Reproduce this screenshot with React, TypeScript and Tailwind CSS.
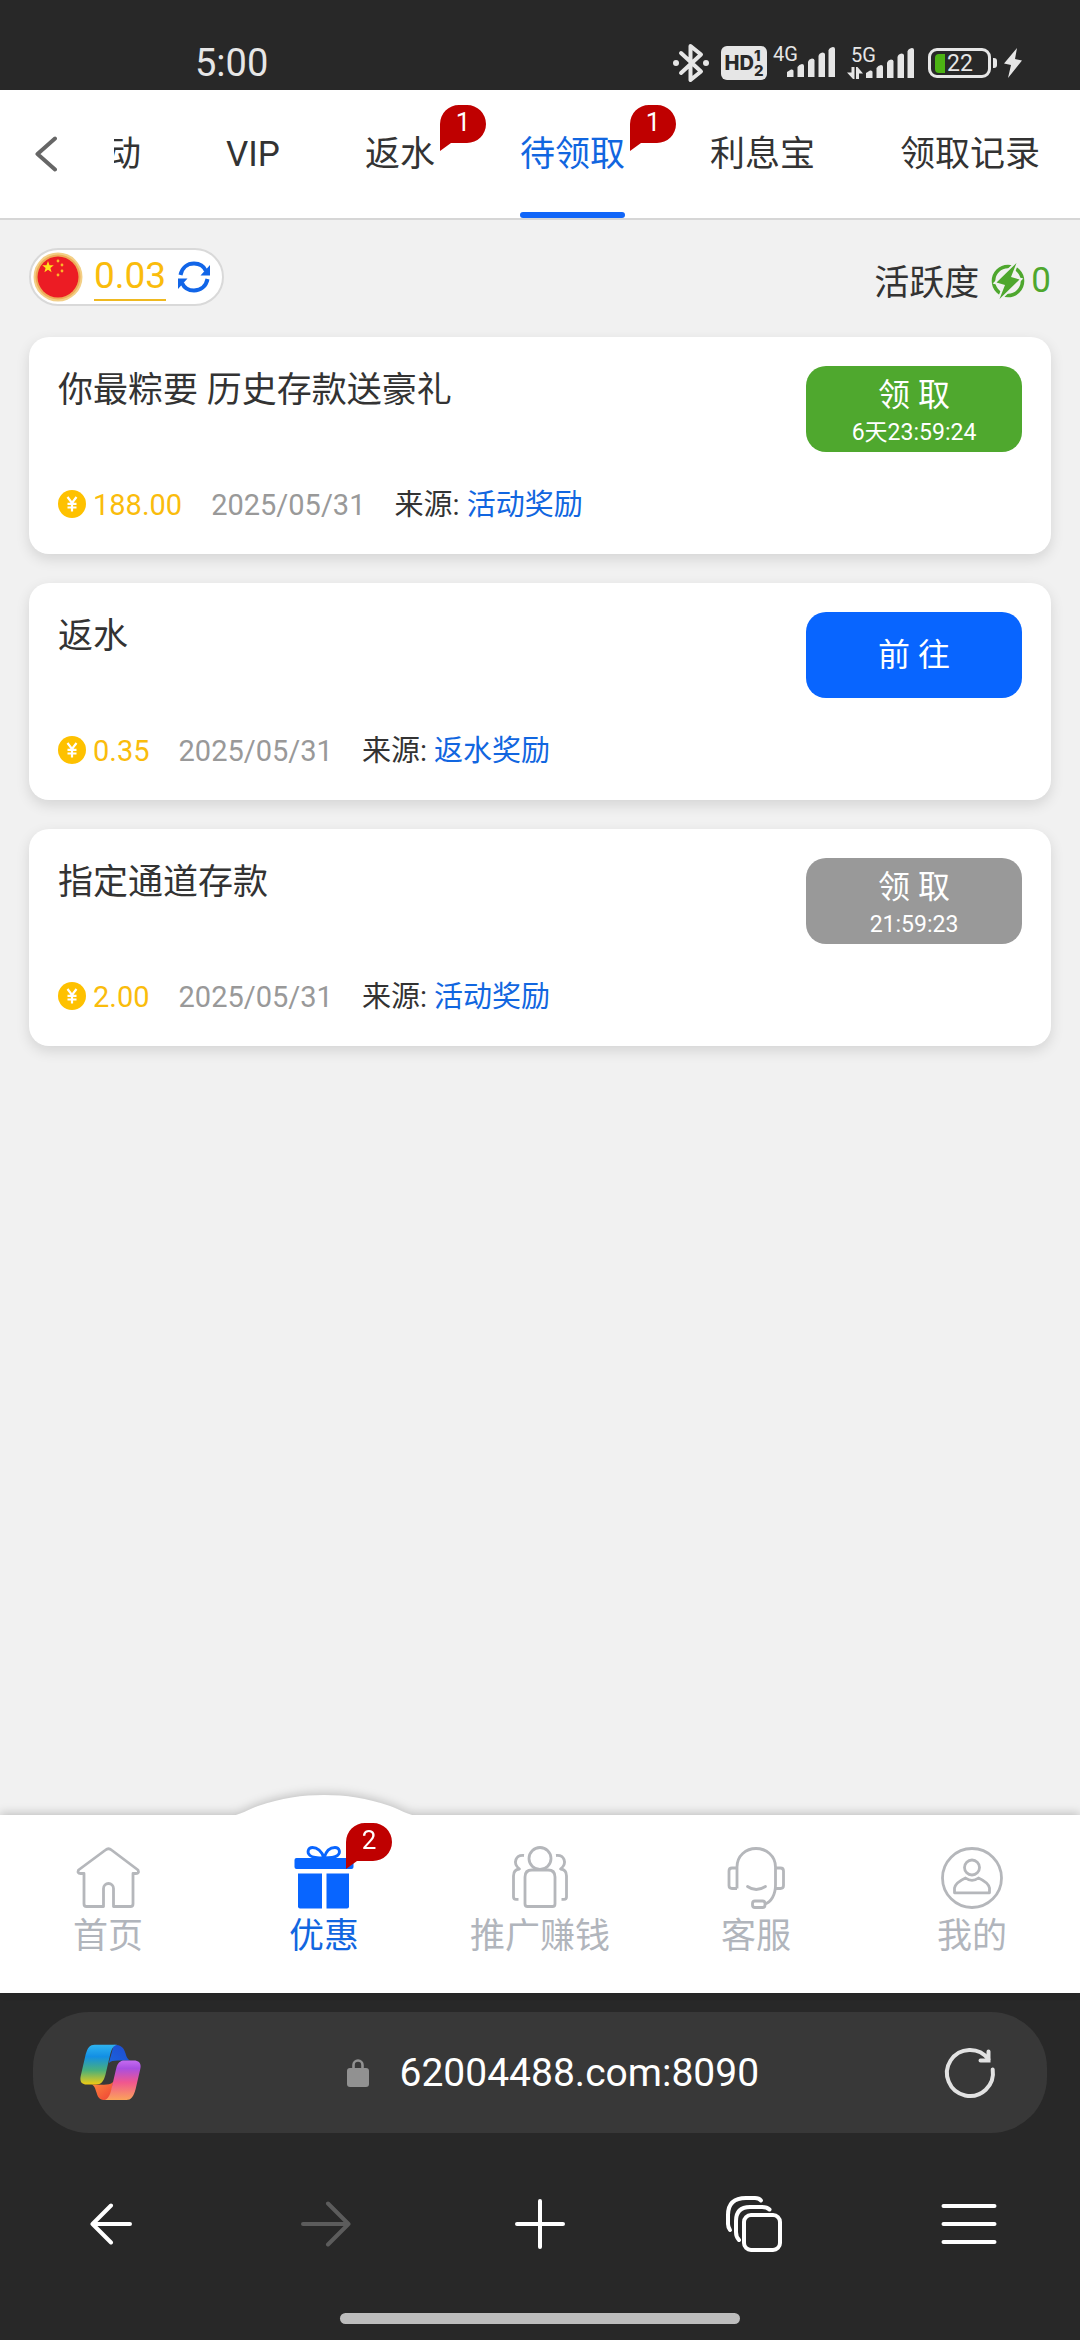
import React from 'react';
import clsx from 'clsx';

type Reward = {
  title: string;
  amount: string;
  date: string;
  source: string;
  action: string;
  countdown?: string;
  tone: string;
  disabled?: boolean;
};

const rewards: Reward[] = [
  {
    title: '你最粽要 历史存款送豪礼',
    amount: '188.00',
    date: '2025/05/31',
    source: '活动奖励',
    action: '领 取',
    countdown: '6天23:59:24',
    tone: 'bg-[#4fa82e]',
  },
  {
    title: '返水',
    amount: '0.35',
    date: '2025/05/31',
    source: '返水奖励',
    action: '前 往',
    tone: 'bg-[#0865ff]',
  },
  {
    title: '指定通道存款',
    amount: '2.00',
    date: '2025/05/31',
    source: '活动奖励',
    action: '领 取',
    countdown: '21:59:23',
    tone: 'bg-[#999999]',
    disabled: true,
  },
];

const tabs = [
  { label: '活动' },
  { label: 'VIP' },
  { label: '返水', badge: 1 },
  { label: '待领取', badge: 1, active: true },
  { label: '利息宝' },
  { label: '领取记录' },
];

const Badge = ({ count, className }: { count: number; className: string }) => (
  <span className={clsx('absolute block h-[46px] w-[46px]', className)}>
    <svg viewBox="0 0 46 46" className="absolute inset-0" aria-hidden="true">
      <path d="M0 46 V19 A19 19 0 0 1 19 0 H27 A19 19 0 0 1 27 38 H11 Z" fill="#bf0000" />
    </svg>
    <span className="relative block h-[34px] text-center text-[26px] leading-[34px] text-white">{count}</span>
  </span>
);

/* Status bar */

const Signal = ({ label, data }: { label: string; data?: boolean }) => (
  <div className={clsx('relative h-8', data ? 'w-[67px]' : 'w-[62px]')}>
    <span className={clsx('absolute -top-1 text-[20px] leading-6 text-[#e6e6e6]', data ? 'left-1' : 'left-0')}>
      {label}
    </span>
    <svg
      viewBox={data ? '0 0 67 32' : '5 0 62 32'}
      className={clsx('h-8', data ? 'w-[67px]' : 'w-[62px]')}
      fill="#e6e6e6"
      aria-hidden="true"
    >
      {data && (
        <path d="M4.500 20 h3 v12 h-1.500 L0 25.500 h4.500 Z M9 32 V20 h1.500 L16 26.500 h-4 V32 Z" />
      )}
      <path d="M19 31 V26 L23 23.500 Q25.500 23 25.500 25 V31 Z" />
      <path d="M29.500 31 V21 Q31 18.500 34 18 Q36 18 36 20 V31 Z" />
      <path d="M40 31 V15.500 Q41 13 44 12.500 Q46.500 12.500 46.500 14.500 V31 Z" />
      <path d="M50.500 31 V10 Q51 7 54.500 6.500 Q57 6.500 57 8.500 V31 Z" />
      <path d="M60.500 31 V4.500 Q61 1.500 65 1 Q67 1 67 3 V31 Z" />
    </svg>
  </div>
);

const StatusBar = () => (
  <div className="flex h-[90px] items-center justify-between bg-[#282828] pt-9 pr-[58px] pl-[195px] text-[#e6e6e6]">
    <span className="text-[38px] leading-[44px]">5:00</span>
    <div className="flex items-center gap-3">
      <svg viewBox="0 0 36 40" className="h-10 w-9" fill="none" stroke="#e6e6e6" strokeWidth="4" aria-hidden="true">
        <path d="M8 10 L28 28.500 L17.500 37 V3 L28 11.500 L8 30" strokeLinejoin="round" strokeLinecap="round" />
        <circle cx="3" cy="20" r="3" fill="#e6e6e6" stroke="none" />
        <circle cx="33" cy="20" r="3" fill="#e6e6e6" stroke="none" />
      </svg>
      <div className="flex gap-[6px]">
        <div className="flex h-[34px] w-[46px] items-center justify-center rounded-[6px] bg-[#e6e6e6] font-['Inter'] font-extrabold text-[#282828]">
          <span className="text-[20px] leading-none">HD</span>
          <span className="flex flex-col text-[15px] leading-[15px]">
            <span>1</span>
            <span>2</span>
          </span>
        </div>
        <Signal label="4G" />
      </div>
      <Signal label="5G" data />
      <div className="flex items-center gap-[7px] pl-[2px]">
        <div className="flex items-center gap-[2px]">
          <div className="flex h-[30px] w-[63px] items-center gap-[2px] rounded-[9px] border-3 border-[#e6e6e6] pl-1">
            <span className="h-[19px] w-[10px] rounded-l-[4px] bg-[#4cb314]" />
            <span className="text-[23px] leading-none">22</span>
          </div>
          <span className="h-[10px] w-1 rounded-r-[3px] bg-[#e6e6e6]" />
        </div>
        <svg viewBox="0 0 18 30" className="h-[30px] w-[18px]" fill="#e6e6e6" aria-hidden="true">
          <path d="M13 0 L0 15.500 L7 17 L4 30 L18 12.500 L11 11 Z" />
        </svg>
      </div>
    </div>
  </div>
);

/* Page header */

const Header = () => (
  <header className="flex h-[130px] border-b-2 border-[#d6d6d6] bg-white">
    <button type="button" aria-label="返回" className="w-[114px] shrink-0 pl-[35px]">
      <svg viewBox="0 0 22 36" className="h-9 w-[22px]" fill="none" stroke="#666" strokeWidth="4" aria-hidden="true">
        <path d="M20 2.500 L2.500 18 L20 33.500" strokeLinecap="round" strokeLinejoin="round" />
      </svg>
    </button>
    <nav className="flex min-w-0 flex-1 justify-end gap-[85px] overflow-hidden pr-10 text-[35px] text-[#333]">
      {tabs.map((tab) => (
        <button
          key={tab.label}
          type="button"
          className={clsx(
            'relative shrink-0 pt-[2px] leading-[50px] whitespace-nowrap',
            tab.active && 'text-[#1166e0]'
          )}
        >
          {tab.label}
          {tab.badge && <Badge count={tab.badge} className="top-[15px] left-full ml-[5px]" />}
          {tab.active && <span className="absolute inset-x-0 bottom-0 h-[6px] rounded-full bg-[#1166f8]" />}
        </button>
      ))}
    </nav>
  </header>
);

/* Balance */

const FlagIcon = () => (
  <svg viewBox="0 0 50 50" className="h-[50px] w-[50px]" aria-hidden="true">
    <circle cx="25" cy="25" r="24.500" fill="#f3cf86" />
    <circle cx="25" cy="25" r="22.500" fill="#eeac58" />
    <circle cx="25" cy="25" r="20.500" fill="#ec1c24" />
    <path d="M15 9 L16.500 13.200 L20.800 13.300 L17.400 16 L18.600 20.200 L15 17.700 L11.400 20.200 L12.600 16 L9.200 13.300 L13.500 13.200 Z" fill="#ffe21a" />
    <g fill="#fbb62a">
      <circle cx="25" cy="9" r="1.400" />
      <circle cx="29" cy="13" r="1.400" />
      <circle cx="29" cy="19" r="1.400" />
      <circle cx="25" cy="23" r="1.400" />
    </g>
  </svg>
);

const BalanceRow = () => (
  <div className="flex items-center justify-between">
    <div className="flex h-[58px] items-center rounded-full border-2 border-[#d9d9d9] bg-white pr-3 pl-[2px]">
      <FlagIcon />
      <a href="#balance" className="ml-[11px] border-b-2 border-[#efb920] text-[37px] leading-[46px] text-[#fabc0c]">
        0.03
      </a>
      <button type="button" aria-label="刷新余额" className="ml-3">
        <svg viewBox="0 0 32 32" className="h-8 w-8" fill="none" stroke="#1165e8" strokeWidth="4" aria-hidden="true">
          <path d="M2.500 14 C4 6.500 9.500 2.500 16 2.500 C21.500 2.500 26 5.500 28 10" />
          <path d="M29.500 18 C28 25.500 22.500 29.500 16 29.500 C10.500 29.500 6 26.500 4 22" />
          <path d="M32 4 V14.500 H22.500 Z M0 28 V17.500 H9.500 Z" fill="#1165e8" stroke="none" />
        </svg>
      </button>
    </div>
    <div className="flex items-center pt-2 text-[35px] leading-[44px] text-[#333]">
      <span className="pt-[6px]">活跃度</span>
      <svg viewBox="0 0 34 36" className="ml-3 h-9 w-[34px]" aria-hidden="true">
        <circle cx="17" cy="18" r="14.500" fill="none" stroke="#4ea72e" strokeWidth="3.600" />
        <path
          d="M25.500 0 L5.500 19.500 L14 22 L8.500 36 L28.500 16.500 L20 14 Z"
          fill="#4ea72e"
          stroke="#f1f1f1"
          strokeWidth="4"
          paintOrder="stroke"
        />
      </svg>
      <span className="ml-[6px] text-[#4ea72e]">0</span>
    </div>
  </div>
);

/* Reward cards */

const CoinIcon = () => (
  <svg viewBox="0 0 28 28" className="mb-[2px] h-7 w-7 shrink-0" aria-hidden="true">
    <circle cx="14" cy="14" r="14" fill="#fec100" />
    <path d="M9.500 7 L14 13 L18.500 7 M14 13 V21.500 M9.500 13.800 H18.500 M9.500 17.500 H18.500" fill="none" stroke="#fff" strokeWidth="2.200" />
  </svg>
);

const RewardCard = ({ reward }: { reward: Reward }) => (
  <article className="flex min-h-[217px] justify-between rounded-[20px] bg-white px-[29px] pt-[29px] pb-7 shadow-[0_5px_14px_rgba(0,0,0,0.12)]">
    <div className="flex flex-col justify-between">
      <h2 className="text-[35px] leading-[50px] text-[#333]">{reward.title}</h2>
      <div className="flex items-center gap-[29px] text-[29px] leading-[42px]">
        <span className="flex items-center gap-[7px] text-[#fabc0c]">
          <CoinIcon />
          {reward.amount}
        </span>
        <time className="text-[#999]">{reward.date}</time>
        <span className="text-[#333]">
          来源:{' '}
          <a href="#source" className="text-[#1166e0]">
            {reward.source}
          </a>
        </span>
      </div>
    </div>
    <button
      type="button"
      disabled={reward.disabled}
      className={clsx(
        'flex h-[86px] w-[216px] shrink-0 flex-col items-center justify-center rounded-[20px] text-white',
        reward.tone,
        reward.countdown && 'pt-[10px]'
      )}
    >
      <span className="text-[32px] leading-[38px]">{reward.action}</span>
      {reward.countdown && <span className="text-[23px] leading-[38px]">{reward.countdown}</span>}
    </button>
  </article>
);

/* Bottom navigation */

const HomeIcon = () => (
  <path d="M29.500 3 Q32.500 .500 35.500 3 L62 23 Q63.500 26.500 60 26.500 H57 V57 Q57 59.500 54.500 59.500 H37.500 V41.500 A5 5 0 0 0 27.500 41.500 V59.500 H10.500 Q8 59.500 8 57 V26.500 H4.500 Q1 26.500 2.500 23 Z" />
);

const GiftIcon = () => (
  <>
    <path d="M32 11 C30 4 25 .500 20.500 .500 C16 .500 14.500 5.500 18 8.500 C21 11 26 11 32 11 C38 11 42 11 45.500 8.500 C49 5.500 47.500 .500 43 .500 C38.500 .500 34 4 32 11 Z" />
    <g fill="#0865ff" stroke="none">
      <rect x="2.500" y="11" width="59" height="11" rx="2" />
      <path d="M6 26.500 H30 V61.500 H8 Q6 61.500 6 59.500 Z" />
      <path d="M34.500 26.500 H57 V59.500 Q57 61.500 55 61.500 H34.500 Z" />
    </g>
  </>
);

const PeopleIcon = () => (
  <>
    <circle cx="32" cy="11.500" r="11" />
    <path d="M24 23 H40 Q47 23 47 30 V57 Q47 59.500 44.500 59.500 H19.500 Q17 59.500 17 57 V30 Q17 23 24 23 Z" />
    <path d="M16 8.500 C8 7.500 4 16 11.500 22 Q5.500 22.500 5.500 29 V50 Q5.500 52.300 8 52.300 H10.500" />
    <path d="M48 8.500 C56 7.500 60 16 52.500 22 Q58.500 22.500 58.500 29 V50 Q58.500 52.300 56 52.300 H53.500" />
  </>
);

const ServiceIcon = () => (
  <>
    <path d="M13 41.500 V20 C13 8.500 22 1.500 32 1.500 C42 1.500 51.500 8.500 51.500 20 V38 C51.500 48 47 55 41 57" />
    <path d="M13 21 H8 Q5 21 5 24 V38.500 Q5 41.500 8 41.500 H13" />
    <path d="M51.500 21 H56.500 Q59.500 21 59.500 24 V38.500 Q59.500 41.500 56.500 41.500 H51.500" />
    <path d="M23.500 39.500 Q32 45.500 41.500 39.500" strokeLinecap="round" />
    <rect x="28.500" y="54" width="12.500" height="6.500" rx="2.500" />
  </>
);

const MineIcon = () => (
  <>
    <circle cx="32" cy="31" r="29.500" />
    <circle cx="32" cy="20.500" r="7.500" />
    <path d="M14.500 45.800 V41 C15.500 36.500 20 33.500 25.500 31 C29.500 34 34.500 34 38.500 31 C44 33.500 48.500 36.500 49.500 41 V45.800 Z" />
  </>
);

const navItems = [
  { label: '首页', icon: <HomeIcon /> },
  { label: '优惠', icon: <GiftIcon />, badge: 2, active: true },
  { label: '推广赚钱', icon: <PeopleIcon /> },
  { label: '客服', icon: <ServiceIcon /> },
  { label: '我的', icon: <MineIcon /> },
];

const BottomNav = () => (
  <nav className="relative grid grid-cols-5 bg-white pb-[28px] drop-shadow-[0_-2px_5px_rgba(0,0,0,0.2)]">
    {navItems.map((item) => (
      <button
        key={item.label}
        type="button"
        className={clsx(
          'relative flex flex-col items-center pt-8 text-[35px] leading-[56px]',
          item.active ? 'text-[#1166e0]' : 'text-[#b1b5bc]'
        )}
      >
        {/* White hump behind the selected item */}
        {item.active && (
          <svg viewBox="0 0 190 22" className="absolute -top-5 h-[22px] w-[190px]" fill="#fff" aria-hidden="true">
            <path d="M0 22 C13 19 18 15 29 11 C52 3 74 0 95 0 C116 0 138 3 161 11 C172 15 177 19 190 22 Z" />
          </svg>
        )}
        <svg
          viewBox="0 0 64 62"
          className="relative h-[62px] w-16 overflow-visible"
          fill="none"
          stroke={item.active ? '#0865ff' : '#b5b7bb'}
          strokeWidth="2.800"
          strokeLinejoin="round"
          aria-hidden="true"
        >
          {item.icon}
        </svg>
        {item.label}
        {item.badge && <Badge count={item.badge} className="top-2 left-1/2 ml-[22px]" />}
      </button>
    ))}
  </nav>
);

/* Browser chrome */

const CopilotIcon = () => (
  <svg viewBox="58 44 184 170" className="h-[57px] w-[61px]" aria-hidden="true">
    <defs>
      <linearGradient id="ribbonCool" x1="0" y1="0" x2="0" y2="1">
        <stop offset="0" stopColor="#2fb4f0" />
        <stop offset=".3" stopColor="#128fe4" />
        <stop offset=".65" stopColor="#4bb07a" />
        <stop offset="1" stopColor="#f0cb12" />
      </linearGradient>
      <linearGradient id="foldBlue" x1="0" y1="1" x2="1" y2="0">
        <stop offset="0" stopColor="#1a63dd" />
        <stop offset="1" stopColor="#2049cf" />
      </linearGradient>
      <linearGradient id="ribbonWarm" x1="0" y1="0" x2="0" y2="1">
        <stop offset="0" stopColor="#c46af0" />
        <stop offset=".2" stopColor="#a94fe0" />
        <stop offset=".55" stopColor="#f0568f" />
        <stop offset="1" stopColor="#fba35a" />
      </linearGradient>
      <linearGradient id="foldOrange" x1="0" y1="0" x2="1" y2="1">
        <stop offset="0" stopColor="#fd8a3c" />
        <stop offset="1" stopColor="#ee4136" />
      </linearGradient>
    </defs>
    <path d="M160 45 C182 45 190 54 195 70 C198 82 202 91 212 93 H172 C158 93 152 95 145 100 Z" fill="url(#foldBlue)" />
    <path d="M92 165 C101 167 104 176 108 190 C112 206 120 212 134 212 C150 212 153 190 158 158 C150 165 142 166 130 166 Z" fill="url(#foldOrange)" />
    <path d="M102 45 H170 C158 48 153 58 149 75 L135 135 C129 157 122 165 106 165 H78 C62 165 57 155 60 140 L75 75 C81 53 88 45 102 45 Z" fill="url(#ribbonCool)" />
    <path d="M192 93 H220 C238 93 243 103 240 118 L226 178 C220 202 212 212 198 212 H132 C143 209 148 198 152 182 L167 118 C171 101 178 93 192 93 Z" fill="url(#ribbonWarm)" />
  </svg>
);

const BrowserBar = () => (
  <footer className="flex flex-col bg-[#282828] pt-[19px] pb-4">
    <div className="mx-[33px] flex h-[121px] items-center rounded-[56px] bg-[#383838] pr-[52px] pl-[47px]">
      <button type="button" aria-label="Copilot">
        <CopilotIcon />
      </button>
      <div className="flex flex-1 items-center justify-center gap-[31px] pl-6">
        <svg viewBox="0 0 22 28" className="h-7 w-[22px]" aria-hidden="true">
          <rect x="0" y="9" width="22" height="19" rx="3" fill="#919191" />
          <path d="M6.500 10 V6 A4.500 4.500 0 0 1 15.500 6 V10" fill="none" stroke="#919191" strokeWidth="2.600" />
        </svg>
        <input
          aria-label="网址"
          readOnly
          value="62004488.com:8090"
          className="w-[364px] text-[39px] leading-[50px] text-white outline-none"
        />
      </div>
      <button type="button" aria-label="重新加载">
        <svg viewBox="0 0 50 50" className="h-[50px] w-[50px] overflow-visible" fill="none" stroke="#e2e2e2" strokeWidth="4" strokeLinecap="round" aria-hidden="true">
          <path d="M47.700 21.500 A23 23 0 1 1 43.400 11.200" />
          <path d="M43.500 3.500 V12.500 H35.500" />
        </svg>
      </button>
    </div>
    <div className="grid h-[180px] grid-cols-5 px-1 pt-[2px] [&>button]:flex [&>button]:items-center [&>button]:justify-center">
      <button type="button" aria-label="后退">
        <svg viewBox="0 0 42 42" className="h-[42px] w-[42px]" fill="none" stroke="#fff" strokeWidth="4" strokeLinecap="round" strokeLinejoin="round" aria-hidden="true">
          <path d="M40 21 H2.500 M21 2.500 L2.500 21 L21 39.500" />
        </svg>
      </button>
      <button type="button" aria-label="前进" disabled>
        <svg viewBox="0 0 50 46" className="h-[46px] w-[50px]" fill="none" stroke="#5c5c5c" strokeWidth="4" strokeLinecap="round" strokeLinejoin="round" aria-hidden="true">
          <path d="M2 23 H47.500 M27 2.500 L47.500 23 L27 43.500" />
        </svg>
      </button>
      <button type="button" aria-label="新建标签页">
        <svg viewBox="0 0 50 50" className="h-[50px] w-[50px]" fill="none" stroke="#fff" strokeWidth="4" strokeLinecap="round" aria-hidden="true">
          <path d="M25 2 V48 M2 25 H48" />
        </svg>
      </button>
      <button type="button" aria-label="标签页">
        <svg viewBox="0 0 56 56" className="h-14 w-14" fill="none" stroke="#fff" strokeWidth="4" strokeLinecap="round" aria-hidden="true">
          <rect x="18" y="19" width="36" height="35" rx="7" />
          <path d="M13 44 Q10 41 10 36 V25 Q10 11 24 11 H36 Q41 11 43.500 13.500" />
          <path d="M4 34 Q2 31 2 28 V19 Q2 2 20 2 H29 Q33 2 35 4.500" />
        </svg>
      </button>
      <button type="button" aria-label="菜单">
        <svg viewBox="0 0 56 42" className="h-[42px] w-14" fill="none" stroke="#fff" strokeWidth="4" strokeLinecap="round" aria-hidden="true">
          <path d="M2.500 3 H53.500 M2.500 21 H53.500 M2.500 39 H53.500" />
        </svg>
      </button>
    </div>
    <div className="h-[11px] w-[37%] self-center rounded-full bg-[#bdbdbd]" />
  </footer>
);

export default function App() {
  return (
    <div className="flex min-h-screen flex-col bg-[#f1f1f1] font-['Roboto','Noto_Sans_CJK_SC',sans-serif]">
      <StatusBar />
      <Header />
      <main className="flex-1 px-[29px] pt-[28px]">
        <BalanceRow />
        <section className="mt-[31px] flex flex-col gap-[29px]">
          {rewards.map((reward) => (
            <RewardCard key={reward.title} reward={reward} />
          ))}
        </section>
      </main>
      <BottomNav />
      <BrowserBar />
    </div>
  );
}
